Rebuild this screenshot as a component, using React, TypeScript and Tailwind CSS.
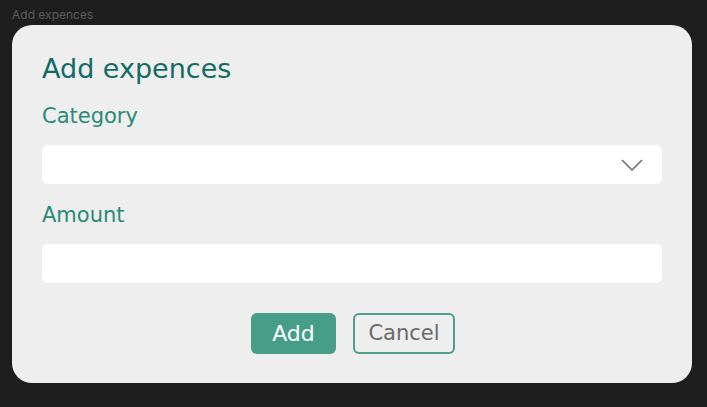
import React from "react";

export default function App() {
  return (
    <div className="w-[707px] h-[407px] bg-[#1e1e1e] overflow-hidden" style={{ fontFamily: '"DejaVu Sans", sans-serif' }}>
      <div className="pl-[12px] pt-[7px] h-[25px] text-[12px] leading-[16px] text-[#5c5c5c]" style={{ fontFamily: 'Inter, sans-serif' }}>
        Add expences
      </div>
      <div className="ml-[12px] w-[680px] h-[358px] bg-[#eeeeee] rounded-[20px] px-[30px] pt-[28px] flex flex-col">
        <h1 className="text-[27px] leading-[32px] text-[#136b66]">Add expences</h1>
        <label className="mt-[18px] text-[21px] leading-[26px] text-[#2a8a78]">Category</label>
        <div className="mt-[16px] h-[39px] bg-white rounded-[6px] flex items-center justify-end pr-[19px]">
          <svg width="22" height="12" viewBox="0 0 22 12" fill="none">
            <path d="M1 1L11 11L21 1" stroke="#6b6b6b" strokeWidth="1.5" />
          </svg>
        </div>
        <label className="mt-[18px] text-[21px] leading-[26px] text-[#2a8a78]">Amount</label>
        <div className="mt-[16px] h-[39px] bg-white rounded-[6px]" />
        <div className="mt-[30px] ml-[2px] flex justify-center gap-[17px]">
          <button className="w-[85px] h-[41px] bg-[#469e88] rounded-[6px] text-white text-[22px]">Add</button>
          <button className="w-[102px] h-[41px] border-2 border-[#4a9e8a] rounded-[6px] text-[#6a6a6a] text-[21px]">Cancel</button>
        </div>
      </div>
    </div>
  );
}
